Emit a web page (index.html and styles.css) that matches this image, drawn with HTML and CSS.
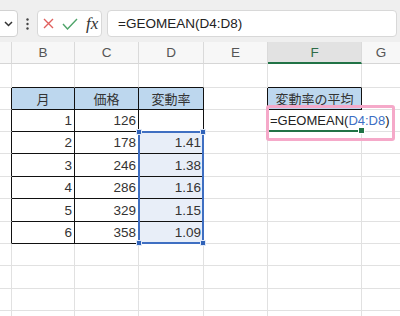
FILE: index.html
```html
<!DOCTYPE html>
<html lang="ja">
<head>
<meta charset="utf-8">
<title>GEOMEAN</title>
<link rel="stylesheet" href="styles.css">
</head>
<body>
<div class="toolbar">
  <div class="namebox">
    <svg width="9" height="6" viewBox="0 0 9 6"><polyline points="1,1 4.5,4.5 8,1" fill="none" stroke="#333" stroke-width="1.5"/></svg>
  </div>
  <div class="more">
    <svg width="3" height="12" viewBox="0 0 3 12"><circle cx="1.5" cy="1.5" r="1.2" fill="#444"/><circle cx="1.5" cy="6" r="1.2" fill="#444"/><circle cx="1.5" cy="10.5" r="1.2" fill="#444"/></svg>
  </div>
  <div class="fxbox">
    <svg class="ico-x" width="11" height="11" viewBox="0 0 11 11"><path d="M1 1 L10 10 M10 1 L1 10" stroke="#e0605e" stroke-width="1.4" fill="none"/></svg>
    <svg class="ico-ok" width="16" height="12" viewBox="0 0 16 12"><path d="M1 6 L5.5 11 L15 1" stroke="#4fa46a" stroke-width="1.4" fill="none"/></svg>
    <span class="fx">fx</span>
  </div>
  <div class="formula">=GEOMEAN(D4:D8)</div>
</div>

<div class="sheet">
  <!-- column headers -->
  <div class="c h"></div>
  <div class="c h">B</div>
  <div class="c h">C</div>
  <div class="c h">D</div>
  <div class="c h">E</div>
  <div class="c h on">F</div>
  <div class="c h">G</div>

  <!-- row above table -->
  <div class="c"></div>
  <div class="c tt"></div>
  <div class="c tt"></div>
  <div class="c tt"></div>
  <div class="c"></div>
  <div class="c tt"></div>
  <div class="c"></div>

  <!-- table header -->
  <div class="c tl"></div>
  <div class="c th">月</div>
  <div class="c th">価格</div>
  <div class="c th">変動率</div>
  <div class="c tl"></div>
  <div class="c th">変動率の平均</div>
  <div class="c"></div>

  <!-- data 1 -->
  <div class="c tl"></div>
  <div class="c td">1</div>
  <div class="c td">126</div>
  <div class="c td"></div>
  <div class="c"></div>
  <div class="c fcell">=GEOMEAN(<span class="ref">D4:D8</span>)<div class="hl"></div></div>
  <div class="c"></div>

  <!-- data 2 -->
  <div class="c tl"></div>
  <div class="c td">2</div>
  <div class="c td">178</div>
  <div class="c td s">1.41<div class="sel"><span class="hd tlh"></span><span class="hd trh"></span><span class="hd blh"></span><span class="hd brh"></span></div></div>
  <div class="c"></div>
  <div class="c"></div>
  <div class="c"></div>

  <!-- data 3 -->
  <div class="c tl"></div>
  <div class="c td">3</div>
  <div class="c td">246</div>
  <div class="c td s">1.38</div>
  <div class="c"></div>
  <div class="c"></div>
  <div class="c"></div>

  <!-- data 4 -->
  <div class="c tl"></div>
  <div class="c td">4</div>
  <div class="c td">286</div>
  <div class="c td s">1.16</div>
  <div class="c"></div>
  <div class="c"></div>
  <div class="c"></div>

  <!-- data 5 -->
  <div class="c tl"></div>
  <div class="c td">5</div>
  <div class="c td">329</div>
  <div class="c td s">1.15</div>
  <div class="c"></div>
  <div class="c"></div>
  <div class="c"></div>

  <!-- data 6 -->
  <div class="c tl"></div>
  <div class="c td">6</div>
  <div class="c td">358</div>
  <div class="c td s">1.09</div>
  <div class="c"></div>
  <div class="c"></div>
  <div class="c"></div>

  <!-- empty rows -->
  <div class="c"></div><div class="c"></div><div class="c"></div><div class="c"></div><div class="c"></div><div class="c"></div><div class="c"></div>
  <div class="c"></div><div class="c"></div><div class="c"></div><div class="c"></div><div class="c"></div><div class="c"></div><div class="c"></div>
  <div class="c"></div><div class="c"></div><div class="c"></div><div class="c"></div><div class="c"></div><div class="c"></div><div class="c"></div>
  <div class="c"></div><div class="c"></div><div class="c"></div><div class="c"></div><div class="c"></div><div class="c"></div><div class="c"></div>
</div>
</body>
</html>
```

FILE: styles.css
```css
* { box-sizing: border-box; }

body {
  margin: 0;
  width: 400px;
  height: 316px;
  overflow: hidden;
  background: #fff;
  font-family: "Liberation Sans", "Noto Sans CJK JP", sans-serif;
}

.toolbar {
  height: 42px;
  background: #efefef;
  display: flex;
  align-items: flex-start;
  padding-top: 10px;
}

.namebox {
  width: 48px;
  height: 27px;
  margin-left: -30px;
  background: #fff;
  border: 1px solid #d2d2d2;
  border-radius: 4px;
  display: flex;
  align-items: center;
  justify-content: flex-end;
  padding-right: 4px;
}

.more {
  width: 19px;
  height: 27px;
  display: flex;
  align-items: center;
  justify-content: center;
}

.fxbox {
  width: 65px;
  height: 27px;
  background: #fff;
  border: 1px solid #d8d8d8;
  border-radius: 4px;
  display: flex;
  align-items: center;
  padding-left: 5px;
}

.ico-x { margin-right: 8px; }
.ico-ok { margin-right: 8px; }

.fx {
  font-family: "Liberation Serif", "DejaVu Serif", serif;
  font-style: italic;
  font-size: 17px;
  color: #333;
  line-height: 1;
}

.formula {
  margin-left: 5px;
  width: 290px;
  height: 27px;
  background: #fff;
  border: 1px solid #d8d8d8;
  border-radius: 4px;
  padding-left: 10px;
  font-size: 13.5px;
  line-height: 25px;
  color: #222;
}

.sheet {
  display: grid;
  grid-template-columns: 12px 63px 64px 65px 64px 94px 39px;
  grid-template-rows: 22px 24px 22px 22px 22px 23px 22px 23px 22px 22px 23px 22px 6px;
  height: 274px;
  overflow: hidden;
}

.c {
  border-right: 1px solid #e1e1e1;
  border-bottom: 1px solid #e1e1e1;
  min-width: 0;
}

.h {
  background: #f7f7f7;
  border-right-color: #dadada;
  border-bottom-color: #d6d6d6;
  display: flex;
  align-items: center;
  justify-content: center;
  font-size: 13.5px;
  color: #555;
}

.h.on {
  background: #e2e2e2;
  color: #2e6b47;
  border-bottom: 2px solid #217346;
}

.tt { border-bottom-color: #111; }
.tl { border-right-color: #111; }

.th {
  background: #bdd7ee;
  border-right-color: #111;
  border-bottom-color: #111;
  display: flex;
  align-items: center;
  justify-content: center;
  font-family: "Noto Sans CJK JP", sans-serif;
  font-size: 13px;
  color: #333;
}

.td {
  border-right-color: #111;
  border-bottom-color: #111;
  display: flex;
  align-items: center;
  justify-content: flex-end;
  padding-right: 2px;
  font-size: 13.5px;
  color: #333;
  position: relative;
}

.s { background: #e8eef8; }

.sel {
  position: absolute;
  left: -1px;
  top: -1px;
  width: 66px;
  height: 113px;
  border: 2px solid #3f6fc2;
  z-index: 2;
}

.hd {
  position: absolute;
  width: 6px;
  height: 6px;
  background: #2f62b8;
  border: 1px solid #dfe8f7;
}
.tlh { left: -4px; top: -4px; }
.trh { right: -4px; top: -4px; }
.blh { left: -4px; bottom: -4px; }
.brh { right: -4px; bottom: -4px; }

.fcell {
  position: relative;
  border-right: none;
  border-bottom: 2px solid #217346;
  display: flex;
  align-items: center;
  padding-left: 2px;
  white-space: nowrap;
  font-size: 13px;
  color: #222;
  overflow: visible;
}

.fcell::after {
  content: "";
  position: absolute;
  right: -3px;
  bottom: -4px;
  width: 5px;
  height: 5px;
  background: #217346;
  border: 1px solid #fff;
}

.ref { color: #3d6fc4; }

.hl {
  position: absolute;
  left: -2px;
  top: -5px;
  width: 129px;
  height: 36px;
  border: 3px solid #f5a9c9;
  border-radius: 3px;
  z-index: 3;
}
```
